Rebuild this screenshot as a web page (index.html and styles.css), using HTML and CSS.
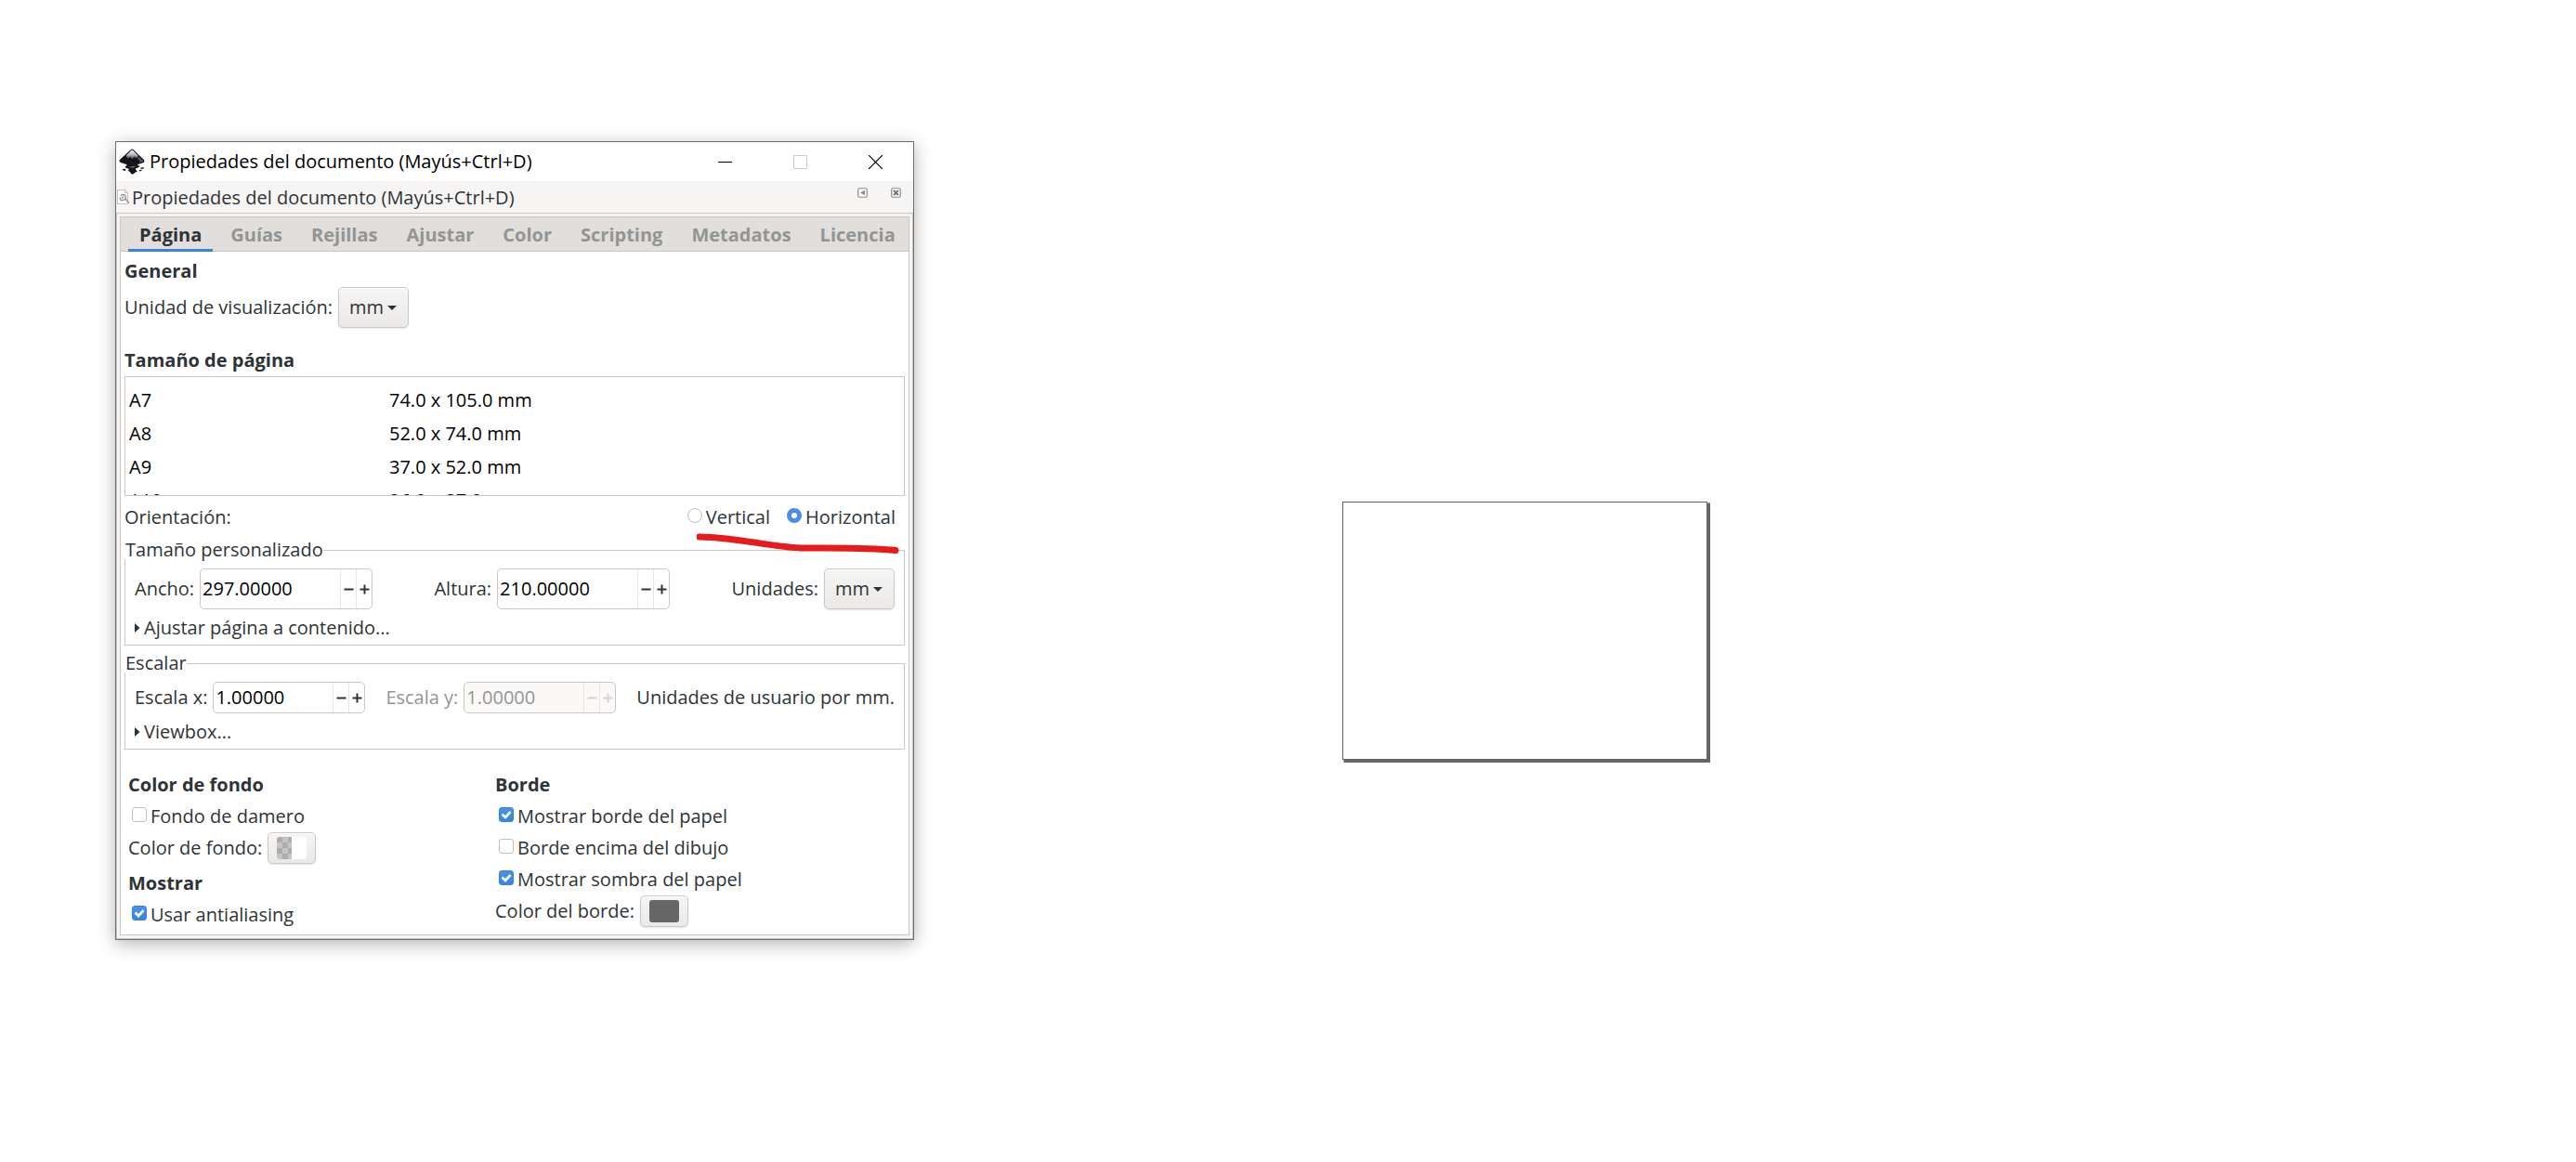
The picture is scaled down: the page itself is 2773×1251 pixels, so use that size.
FILE: index.html
```html
<!DOCTYPE html>
<html lang="es">
<head>
<meta charset="utf-8">
<meta name="viewport" content="width=device-width, initial-scale=1">
<title>Propiedades del documento</title>
<link rel="stylesheet" href="styles.css">
</head>
<body>
<main class="desktop">
  <section class="dialog" aria-label="Propiedades del documento">
    <header class="titlebar">
      <svg class="app-icon" viewBox="0 0 28 28" aria-hidden="true">
        <defs>
          <linearGradient id="ink" x1="0" y1="0" x2="0" y2="1">
            <stop offset="0" stop-color="#f4f5f8"/><stop offset="0.5" stop-color="#b4b8c4"/><stop offset="1" stop-color="#3a3a44"/>
          </linearGradient>
        </defs>
        <path d="M12.6 1.2Q14.2-.2 15.8 1.2L26.6 11.8Q28.6 14 26 15.2L20.4 17Q19.6 18 22.4 18.6 22.6 20.2 18 21.2 17.600 23 20 24.600 17 25.400 16.400 26.800 14.500 28.600 12.800 26.400 12.400 25 9.600 23.600 12 22.600 9.800 21.400 6.800 20.800 6.600 19.400 9.800 18.200 8 17L2 15Q-.8 13.600 1.400 11.600Z" fill="#14141a"/>
        <path d="M13 2.200Q14.200 1 15.400 2.200L21 7.800 18.600 10.600 16.600 8.600 14.400 11.400 12 8.800 9.600 10.800 7.600 7.600Z" fill="url(#ink)"/>
        <path d="M21 8.600 26.400 13.400 21.600 15.600Q24 13 20.200 11Z" fill="#555a6c"/>
        <path d="M10 20Q14 18.800 18.600 19.400L15 20.600Z" fill="#8d92a2"/>
        <path d="M3.600 22.600 6.800 21.400 7.400 23.400Q5 24.600 3.600 22.600ZM21.400 23.400Q23.600 22 25 23.600 23 25 21.400 23.400ZM23 20.800 26.400 20 27 21.200 24 22Z" fill="#14141a"/>
      </svg>
      <h1 class="title">Propiedades del documento (Mayús+Ctrl+D)</h1>
      <button class="win-btn" aria-label="Minimizar"><svg width="15" height="15"><path d="M0 7.500H15" stroke="#000"/></svg></button>
      <button class="win-btn" aria-label="Maximizar" disabled><svg width="15" height="15"><path d="M.5.5H14.500V14.500H.5Z" stroke="#ccc" fill="none"/></svg></button>
      <button class="win-btn" aria-label="Cerrar"><svg width="15" height="15"><path d="M0 0 15 15M15 0 0 15" stroke="#000" stroke-width="1.200"/></svg></button>
    </header>
    <div class="dockbar">
      <svg class="doc-icon" width="14" height="18" viewBox="0 0 14 18" aria-hidden="true">
        <path d="M.5 1.500H8.500L11.500 4.500V16.500H.5Z" fill="#fbfbfb" stroke="#c4c1be"/>
        <path d="M8.500 1.500V4.500H11.500" fill="none" stroke="#c4c1be"/>
        <path d="M4 7.500Q6.500 5.500 8.800 7.600 10 9.600 9 11.400L13 15.800M3.500 9.500Q2.600 12 5 12.800L8.600 11.600M4.800 10.400 7 8.800" fill="none" stroke="#8f8f8f" stroke-width="1.300"/>
      </svg>
      <h2 class="dock-title">Propiedades del documento (Mayús+Ctrl+D)</h2>
      <button class="dock-btn" aria-label="Minimizar panel"><svg width="11" height="11"><rect x=".75" y=".75" width="9.500" height="9.500" rx="1.500" fill="#fff" stroke="#888" stroke-width="1.200"/><path d="M8 2.800V8.200L3 5.500Z" fill="#888"/></svg></button>
      <button class="dock-btn" aria-label="Cerrar panel"><svg width="11" height="11"><rect x=".75" y=".75" width="9.500" height="9.500" rx="1.500" fill="#fff" stroke="#888" stroke-width="1.200"/><path d="M3 3 8 8M8 3 3 8" stroke="#777" stroke-width="2"/></svg></button>
    </div>
    <div class="dock-frame">
      <div class="notebook">
        <nav class="tabs" role="tablist">
          <button class="tab tab-active" role="tab" aria-selected="true">Página</button>
          <button class="tab" role="tab">Guías</button>
          <button class="tab" role="tab">Rejillas</button>
          <button class="tab" role="tab">Ajustar</button>
          <button class="tab" role="tab">Color</button>
          <button class="tab" role="tab">Scripting</button>
          <button class="tab" role="tab">Metadatos</button>
          <button class="tab" role="tab">Licencia</button>
        </nav>
        <form class="panel">
          <h3 class="heading">General</h3>
          <div class="field">
            <label for="display-unit">Unidad de visualización:</label>
            <select class="combo" id="display-unit"><option>mm</option></select>
          </div>

          <h3 class="heading heading-size">Tamaño de página</h3>
          <div class="sizes">
            <table class="size-table">
              <tr><td>A7</td><td>74.0 x 105.0 mm</td></tr>
              <tr><td>A8</td><td>52.0 x 74.0 mm</td></tr>
              <tr><td>A9</td><td>37.0 x 52.0 mm</td></tr>
              <tr><td>A10</td><td>26.0 x 37.0 mm</td></tr>
            </table>
          </div>

          <div class="orientation">
            <span class="orientation-name">Orientación:</span>
            <label class="option"><input class="radio" type="radio" name="orientation">Vertical</label>
            <label class="option"><input class="radio" type="radio" name="orientation" checked>Horizontal</label>
            <svg class="marker" width="218" height="22" viewBox="0 0 218 22" aria-hidden="true">
              <path d="M3 4C38 4 76 14 112 16 146 16 182 15 214 18.500" fill="none" stroke="#e61c1c" stroke-width="7" stroke-linecap="round"/>
            </svg>
          </div>

          <fieldset class="frame">
            <legend class="frame-title">Tamaño personalizado</legend>
            <div class="frame-row">
              <div class="field">
                <label for="width">Ancho:</label>
                <div class="spin spin-tall"><input class="spin-text" id="width" value="297.00000"><button class="step" type="button" aria-label="Reducir ancho"><svg width="11" height="11"><path d="M.5 5.500H10.500" stroke="#2e3436" stroke-width="2"/></svg></button><button class="step" type="button" aria-label="Aumentar ancho"><svg width="11" height="11"><path d="M.5 5.500H10.500M5.500.5V10.500" stroke="#2e3436" stroke-width="2"/></svg></button></div>
              </div>
              <div class="field">
                <label for="height">Altura:</label>
                <div class="spin spin-tall"><input class="spin-text" id="height" value="210.00000"><button class="step" type="button" aria-label="Reducir altura"><svg width="11" height="11"><path d="M.5 5.500H10.500" stroke="#2e3436" stroke-width="2"/></svg></button><button class="step" type="button" aria-label="Aumentar altura"><svg width="11" height="11"><path d="M.5 5.500H10.500M5.500.5V10.500" stroke="#2e3436" stroke-width="2"/></svg></button></div>
              </div>
              <div class="field">
                <label for="units">Unidades:</label>
                <select class="combo" id="units"><option>mm</option></select>
              </div>
            </div>
            <button class="expander" type="button"><svg width="6" height="10"><path d="M0 0 5.500 5 0 10Z" fill="#2e3436"/></svg>Ajustar página a contenido...</button>
          </fieldset>

          <fieldset class="frame frame-scale">
            <legend class="frame-title">Escalar</legend>
            <div class="frame-row">
              <div class="field">
                <label for="scale-x">Escala x:</label>
                <div class="spin"><input class="spin-text" id="scale-x" value="1.00000"><button class="step" type="button" aria-label="Reducir escala x"><svg width="11" height="11"><path d="M.5 5.500H10.500" stroke="#2e3436" stroke-width="2"/></svg></button><button class="step" type="button" aria-label="Aumentar escala x"><svg width="11" height="11"><path d="M.5 5.500H10.500M5.500.5V10.500" stroke="#2e3436" stroke-width="2"/></svg></button></div>
              </div>
              <div class="field field-disabled">
                <label for="scale-y">Escala y:</label>
                <div class="spin spin-disabled"><input class="spin-text" id="scale-y" value="1.00000" disabled><button class="step" type="button" aria-label="Reducir escala y" disabled><svg width="11" height="11"><path d="M.5 5.500H10.500" stroke="#d5d3d1" stroke-width="2"/></svg></button><button class="step" type="button" aria-label="Aumentar escala y" disabled><svg width="11" height="11"><path d="M.5 5.500H10.500M5.500.5V10.500" stroke="#d5d3d1" stroke-width="2"/></svg></button></div>
              </div>
              <span>Unidades de usuario por mm.</span>
            </div>
            <button class="expander" type="button"><svg width="6" height="10"><path d="M0 0 5.500 5 0 10Z" fill="#2e3436"/></svg>Viewbox...</button>
          </fieldset>

          <div class="columns">
            <div class="column">
              <h3 class="column-heading">Color de fondo</h3>
              <label class="option option-row"><input class="check" type="checkbox">Fondo de damero</label>
              <div class="field"><span>Color de fondo:</span><button class="color-btn" type="button" aria-label="Elegir color de fondo"><span class="swatch swatch-clear"></span></button></div>
              <h3 class="column-heading heading-show">Mostrar</h3>
              <label class="option option-row"><input class="check" type="checkbox" checked>Usar antialiasing</label>
            </div>
            <div class="column">
              <h3 class="column-heading">Borde</h3>
              <label class="option option-row"><input class="check" type="checkbox" checked>Mostrar borde del papel</label>
              <label class="option option-row"><input class="check" type="checkbox">Borde encima del dibujo</label>
              <label class="option option-row"><input class="check" type="checkbox" checked>Mostrar sombra del papel</label>
              <div class="field"><span>Color del borde:</span><button class="color-btn" type="button" aria-label="Elegir color del borde"><span class="swatch"></span></button></div>
            </div>
          </div>
        </form>
      </div>
    </div>
  </section>
  <div class="paper"></div>
</main>
</body>
</html>
```
FILE: styles.css
```css
* { box-sizing: border-box; }

body {
  margin: 0;
  background: #fff;
  color: #2e3436;
  font: 20px/28px "Open Sans", "Noto Sans", sans-serif;
}

button, input, select { font: inherit; color: inherit; margin: 0; }
button { padding: 0; border: 0; background: none; }
h1, h2, h3 { margin: 0; font-size: inherit; font-weight: 400; }
svg { display: block; flex: none; }

.desktop {
  display: flex;
  align-items: flex-start;
  gap: 461px;
  min-height: 100vh;
  padding: 152px 124px 64px;
}

/* Dialog window */
.dialog {
  flex: 0 1 860px;
  min-width: 0;
  border: 1px solid #6b6b68;
  background: #f6f5f4;
  box-shadow: 0 4px 18px rgba(0, 0, 0, .3);
}
.titlebar {
  display: flex;
  align-items: center;
  height: 42px;
  padding-left: 3px;
  background: #fff;
  color: #000;
}
.app-icon { width: 28px; height: 28px; margin-right: 5px; }
.title { flex: 1; white-space: nowrap; }
.win-btn { display: grid; place-items: center; width: 81px; height: 42px; }
.dockbar { display: flex; height: 34px; padding-right: 1px; }
.doc-icon { align-self: center; margin: 0 2px 0 1px; }
.dock-title { flex: 1; line-height: 36px; white-space: nowrap; }
.dock-btn { display: grid; place-items: center; width: 36px; height: 25px; }

.dock-frame { padding: 3px; border: 1px solid #cdc7c2; }
.notebook { border: 1px solid #cdc7c2; background: #fff; }
.tabs {
  display: flex;
  gap: 7px;
  height: 37px;
  padding-left: 8px;
  border-bottom: 1px solid #cdc7c2;
  background: #e1dedb;
}
.tab { height: 37px; padding: 0 12px; font-weight: 700; color: #929595; }
.tab-active { color: #2e3436; border-bottom: 3px solid #3584e4; padding-top: 3px; }

/* Page panel */
.panel { padding: 6px 4px 4px; }
.heading { margin-bottom: 2px; font-weight: 700; line-height: 30px; }
.heading-size { margin-top: 20px; }
.field { display: flex; align-items: center; gap: 6px; white-space: nowrap; }

.combo {
  appearance: none;
  width: 76px;
  height: 44px;
  padding: 0 0 0 11px;
  border: 1px solid #cdc7c2;
  border-radius: 5px;
  background:
    url("data:image/svg+xml,%3Csvg xmlns='http://www.w3.org/2000/svg' width='10' height='5'%3E%3Cpath d='M0 0H10L5 5Z' fill='%232e3436'/%3E%3C/svg%3E") no-repeat right 12px center,
    linear-gradient(#f6f5f4, #ebe9e7);
  box-shadow: 0 1px 2px rgba(0, 0, 0, .1), inset 0 1px #fff;
}

.sizes { height: 129px; padding-top: 7px; border: 1px solid #cdc7c2; overflow: hidden; }
.size-table { width: 100%; border-spacing: 0; table-layout: fixed; color: #000; }
.size-table td { height: 36px; padding: 0 0 0 4px; }
.size-table td:first-child { width: 280px; }

.orientation {
  position: relative;
  display: flex;
  align-items: center;
  gap: 18px;
  height: 46px;
  padding-right: 10px;
}
.orientation-name { flex: 1; }
.option { display: flex; align-items: center; gap: 4px; white-space: nowrap; }
.option-row { height: 34px; padding-left: 4px; }
.radio, .check {
  appearance: none;
  flex: none;
  width: 16px;
  height: 16px;
  margin-bottom: 4px;
  border: 1px solid #c6c0ba;
  background: #fff;
}
.radio { border-radius: 50%; }
.radio:checked { border: 5px solid #478fe7; }
.check { border-radius: 3px; }
.check:checked {
  border-color: #3584e4;
  background:
    url("data:image/svg+xml,%3Csvg xmlns='http://www.w3.org/2000/svg' width='14' height='14'%3E%3Cpath d='M2.500 6.500 6 10 11.500 4' fill='none' stroke='%23fff' stroke-width='2.600'/%3E%3C/svg%3E") center no-repeat,
    linear-gradient(#4b92e8, #3584e4);
}

/* Hand-drawn underline over the orientation options */
.marker { position: absolute; right: 6px; top: 40px; }

.frame { min-width: 0; margin: 2px 0 0; padding: 10px 10px 1px; border: 1px solid #cdc7c2; }
.frame-scale { margin-top: 9px; }
.frame-title { height: 20px; margin-left: -11px; padding: 0 0 0 1px; line-height: 20px; background: #fff; }
.frame-row { display: flex; align-items: center; justify-content: space-between; white-space: nowrap; }

.spin {
  display: flex;
  width: 164px;
  height: 34px;
  border: 1px solid #cdc7c2;
  border-radius: 5px;
  background: #fff;
  overflow: hidden;
}
.spin-tall { width: 186px; height: 44px; }
.spin-text { flex: 1; min-width: 0; padding: 0 0 0 2px; border: 0; background: none; color: #000; }
.step { display: grid; place-items: center; width: 17px; border-left: 1px solid #e8e6e4; }
.field-disabled { color: #929595; }
.spin-disabled { background: #faf9f8; }
.spin-disabled .spin-text { color: #929595; }

.expander { display: flex; align-items: center; gap: 4px; height: 34px; margin-top: 3px; }

.columns { display: grid; grid-template-columns: 395px 1fr; margin-top: 21px; padding-left: 4px; }
.column-heading { font-weight: 700; line-height: 34px; }
.heading-show { margin-top: 4px; }
.color-btn {
  display: grid;
  place-items: center;
  width: 52px;
  height: 34px;
  border: 1px solid #cdc7c2;
  border-radius: 5px;
  background: linear-gradient(#f6f5f4, #ebe9e7);
  box-shadow: 0 1px 2px rgba(0, 0, 0, .1), inset 0 1px #fff;
}
.swatch { width: 32px; height: 24px; border-radius: 3px; background: #666; }
.swatch-clear {
  background:
    linear-gradient(#fff, #fff) right / 16px 100% no-repeat,
    repeating-conic-gradient(#c4c4c4 0 25%, #adadad 0 50%) -6px -6px / 12px 12px;
}

/* Document page on the canvas */
.paper {
  flex: 0 1 393px;
  aspect-ratio: 297 / 210;
  margin-top: 388px;
  border: 1px solid #666;
  background: #fff;
  box-shadow: 2px 2px #666, 3px 2px #666, 2px 3px #666, 3px 3px #666, 3px 1px #aaa, 1px 3px #aaa;
}
```
